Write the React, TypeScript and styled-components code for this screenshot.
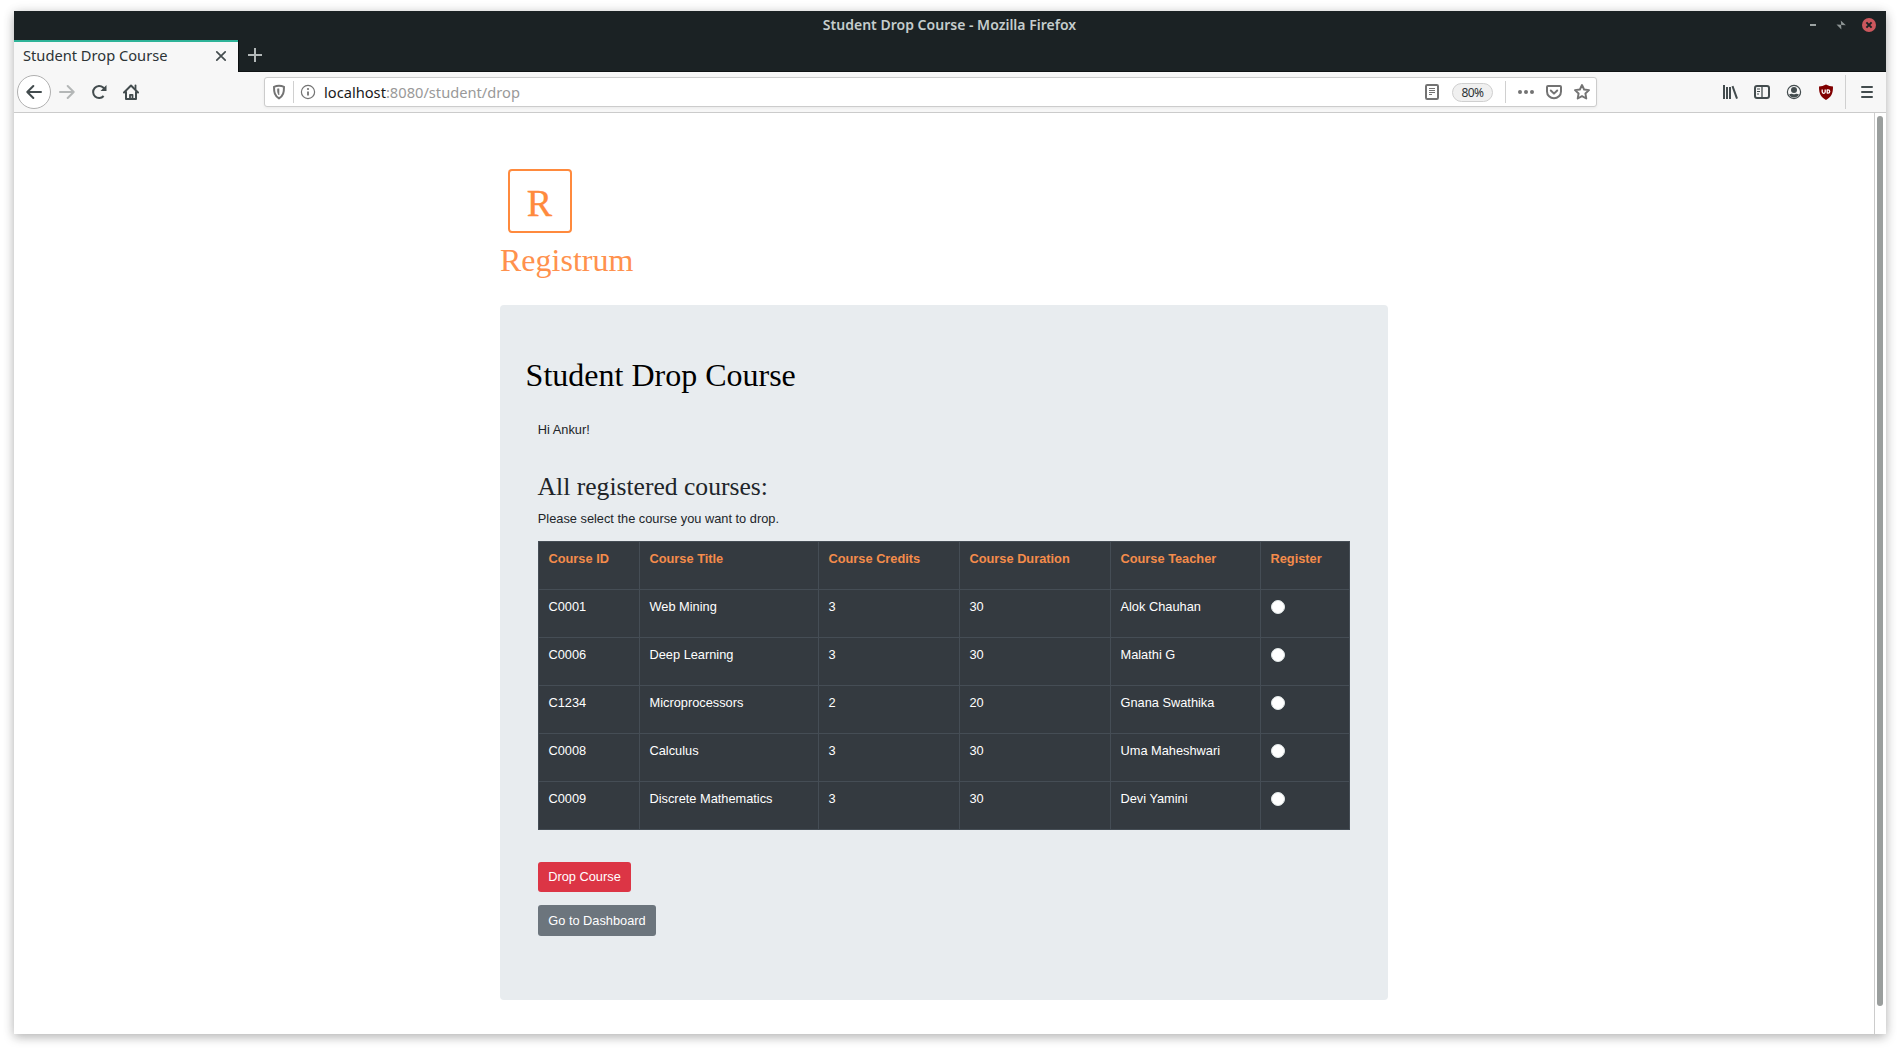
import React from "react";
import styled, { createGlobalStyle } from "styled-components";

const ui = `"Noto Sans", "Open Sans", sans-serif`;
const sans = `"Liberation Sans", Arial, sans-serif`;
const serif = `"Liberation Serif", "Times New Roman", serif`;

const GlobalStyle = createGlobalStyle`
  *, *::before, *::after { box-sizing: border-box; }
  html, body { margin: 0; background: #fff; }
  body { height: 1051px; overflow: hidden; }
`;

const Desktop = styled.div`
  height: 1051px;
  padding: 11px 14px 17px;
  background: #fff;
`;

const Window = styled.div`
  display: flex;
  flex-direction: column;
  height: 1023px;
  background: #fff;
  box-shadow: 0 3px 10px rgba(0, 0, 0, 0.28), 0 0 14px rgba(0, 0, 0, 0.05);
`;

const TitleBar = styled.header`
  display: grid;
  grid-template-columns: 1fr auto 1fr;
  align-items: center;
  flex: none;
  height: 29px;
  background: #1b2224;
`;

const WindowTitle = styled.div`
  grid-column: 2;
  padding: 0 1px 1px 0;
  font: 600 14px/20px ${ui};
  letter-spacing: 0.01px;
  color: #c5cdcd;
  white-space: nowrap;
`;

const WindowControls = styled.div`
  display: flex;
  justify-content: flex-end;
  align-items: center;
  gap: 14px;
  padding: 0 10px 1px 0;
  svg { display: block; }
`;

const TabStrip = styled.div`
  display: flex;
  flex: none;
  height: 32px;
  background: #1b2224;
`;

const Tab = styled.div`
  display: flex;
  align-items: center;
  justify-content: space-between;
  width: 224px;
  padding: 0 11px 4px 9px;
  border-top: 2px solid #2eb398;
  background: #f7f7f7;
  font: 14.67px/20px ${ui};
  color: #2c3335;
  svg { display: block; margin-top: 2px; }
`;

const NewTab = styled.div`
  display: flex;
  align-items: center;
  flex: 1;
  padding: 0 0 1px 9px;
  border-left: 1px solid #0c0f10;
  border-bottom: 1px solid #0f1314;
`;

const Toolbar = styled.div`
  display: flex;
  align-items: center;
  flex: none;
  height: 41px;
  background: #f7f7f7;
  border-bottom: 1px solid #cbcbcb;
  svg { display: block; flex: none; }
`;

const NavButtons = styled.div`
  display: flex;
  align-items: center;
  width: 250px;
  padding-left: 3px;
`;

const BackButton = styled.div`
  display: grid;
  place-items: center;
  width: 34px;
  height: 34px;
  border: 1px solid #b0b0b0;
  border-radius: 50%;
  background: #fff;
`;

const NavIcon = styled.div<{ $gap: number }>`
  margin-left: ${(p) => p.$gap}px;
`;

const UrlBar = styled.div`
  display: flex;
  align-items: center;
  width: 1333px;
  height: 30px;
  border: 1px solid #cccccc;
  border-radius: 3px;
  background: #fff;
  box-shadow: 0 1px 3px rgba(0, 0, 0, 0.06);
`;

const Divider = styled.span<{ $height: number; $left: number; $right: number }>`
  width: 1px;
  height: ${(p) => p.$height}px;
  margin: 0 ${(p) => p.$right}px 0 ${(p) => p.$left}px;
  background: #d0d0d0;
`;

const Address = styled.div`
  flex: 1;
  padding-left: 8px;
  font: 14.67px/20px ${ui};
  color: #999;
  span { color: #1a1a1a; }
`;

const ZoomBadge = styled.span`
  width: 41px;
  height: 19px;
  margin-left: 12px;
  border: 1px solid #cfcfcf;
  border-radius: 10px;
  background: #f0f0f0;
  font: 12px/17px ${ui};
  letter-spacing: -0.5px;
  text-align: center;
  color: #2c3335;
`;

const PageActions = styled.div`
  display: flex;
  align-items: center;
  gap: 10px;
  padding-right: 6px;
`;

const Extensions = styled.div`
  display: flex;
  align-items: center;
  flex: 1;
  justify-content: flex-end;
  padding-right: 11px;
`;

const Viewport = styled.div`
  display: flex;
  flex: 1;
  min-height: 0;
`;

const Page = styled.main`
  flex: 1;
  padding: 56px 0 0 486px;
  font: 12.8px/19.2px ${sans};
  color: #212529;
`;

const ScrollTrack = styled.div`
  width: 12px;
  padding: 3px 2px;
  border-left: 1px solid #cccccc;
`;

const ScrollThumb = styled.div`
  width: 6px;
  height: 890px;
  border-radius: 3px;
  background: #9a9e9d;
`;

const Logo = styled.div`
  display: grid;
  place-items: center;
  width: 64px;
  height: 64px;
  margin-left: 8px;
  padding: 4px 1px 0 0;
  border: 2px solid #ff8a3d;
  border-radius: 4px;
  font: 38px/1 ${serif};
  color: #ff8a3d;
  -webkit-text-stroke: 0.3px #ff8a3d;
`;

const Brand = styled.h2`
  margin: 8px 0 0;
  font: 400 32px/38px ${serif};
  color: #ff914d;
`;

const Card = styled.section`
  width: 888px;
  height: 695px;
  margin-top: 26px;
  padding: 51px 25.6px 0;
  border-radius: 4px;
  background: #e8ecef;
`;

const PageHeading = styled.h2`
  margin: 0;
  font: 400 32px/38px ${serif};
  color: #000;
`;

const CardBody = styled.div`
  padding: 26px 12.4px 0;
`;

const Text = styled.p`
  margin: 0 0 0 -0.2px;
`;

const SectionHeading = styled.h4`
  margin: 32px 0 7px -0.4px;
  font: 400 25.6px/31px ${serif};
`;

const Table = styled.table`
  width: 812px;
  margin-top: 13px;
  table-layout: fixed;
  border-collapse: separate;
  border-spacing: 0;
  border-top: 1px solid #454d55;
  border-left: 1px solid #454d55;
  background: #343a40;
  color: #fff;
`;

const Column = styled.col<{ $width: number }>`
  width: ${(p) => p.$width}px;
`;

const Cell = styled.td`
  height: 48px;
  padding: 7px 9px 0 9.5px;
  border-right: 1px solid #454d55;
  border-bottom: 1px solid #454d55;
  vertical-align: top;
  text-align: left;
`;

const HeadCell = styled(Cell)`
  font-weight: 700;
  color: #f58c4b;
`;

const Radio = styled.input`
  appearance: none;
  display: block;
  width: 14px;
  height: 14px;
  margin: 3px 0 0 0.5px;
  border: 1px solid #dfe6e6;
  border-radius: 50%;
  background: #fff;
`;

const Actions = styled.div`
  display: flex;
  flex-direction: column;
  align-items: flex-start;
  gap: 13px;
  margin-top: 32px;
`;

const Button = styled.button<{ $color: string; $width: number; $height: number }>`
  width: ${(p) => p.$width}px;
  height: ${(p) => p.$height}px;
  padding: 0 0 1px;
  border: 0;
  border-radius: 3px;
  background: ${(p) => p.$color};
  font: 12.8px/19px ${sans};
  color: #fff;
`;

const columns = [
  { title: "Course ID", width: 101 },
  { title: "Course Title", width: 179 },
  { title: "Course Credits", width: 141 },
  { title: "Course Duration", width: 151 },
  { title: "Course Teacher", width: 150 },
  { title: "Register", width: 89 },
];

const courses = [
  ["C0001", "Web Mining", "3", "30", "Alok Chauhan"],
  ["C0006", "Deep Learning", "3", "30", "Malathi G"],
  ["C1234", "Microprocessors", "2", "20", "Gnana Swathika"],
  ["C0008", "Calculus", "3", "30", "Uma Maheshwari"],
  ["C0009", "Discrete Mathematics", "3", "30", "Devi Yamini"],
];

const INK = "#434c4e";
const GREY = "#737373";

type IconProps = {
  size?: number;
  color?: string;
  width?: number;
  children: React.ReactNode;
};

const Icon = ({ size = 16, color = INK, width = 2, children }: IconProps) => (
  <svg
    width={size}
    height={size}
    viewBox="0 0 16 16"
    fill="none"
    stroke={color}
    strokeWidth={width}
    strokeLinecap="round"
    strokeLinejoin="round"
  >
    {children}
  </svg>
);

const Controls = () => (
  <WindowControls>
    <svg width="14" height="14">
      <path d="M4 6h6v2H4z" fill="#9ca3a3" />
    </svg>
    <svg width="14" height="14" fill="#8d9494">
      <path d="M6.800 2.500l5 4.800-4.600-.4z" />
      <path d="M2.500 6.400l4.600.4.300 4.700z" />
    </svg>
    <svg width="14" height="14">
      <circle cx="7" cy="7" r="7" fill="#cc575d" />
      <path d="M4.400 4.400l5.200 5.200M9.600 4.400l-5.200 5.200" stroke="#1b2224" strokeWidth="2" />
    </svg>
  </WindowControls>
);

const BrowserToolbar = () => (
  <Toolbar>
    <NavButtons>
      <BackButton>
        <Icon>
          <path d="M15 8H1.500M7.300 2L1.300 8l6 6" />
        </Icon>
      </BackButton>
      <NavIcon $gap={8}>
        <Icon color="#b4b7b7">
          <path d="M1 8h13.500M8.700 2l6 6-6 6" />
        </Icon>
      </NavIcon>
      <NavIcon $gap={16}>
        <Icon>
          <path d="M12.600 12A6 6 0 1 1 12.200 3.600L14 5.500" strokeLinecap="butt" />
          <path d="M15.500 1v6H9.500z" fill={INK} stroke="none" />
        </Icon>
      </NavIcon>
      <NavIcon $gap={16}>
        <Icon>
          <path d="M1 8.500L8 1.500l7 7M3 8v7h10V8" />
          <path d="M7 15v-4.200h2.500V15" strokeWidth="1.800" />
          <path d="M12.500 1.500V5" strokeWidth="1.800" />
        </Icon>
      </NavIcon>
    </NavButtons>
    <UrlBar>
      <NavIcon $gap={6}>
        <Icon color={GREY}>
          <path d="M8 1.800c1.700 0 3.300.3 5 1 0 5.500-.6 9-5 11.600C3.600 11.800 3 8.300 3 2.800c1.700-.7 3.300-1 5-1z" />
          <path d="M8 5v6c-1.200-1.200-1.600-3-1.600-5.800z" strokeWidth=".6" fill={GREY} />
        </Icon>
      </NavIcon>
      <Divider $height={22} $left={6} $right={6} />
      <Icon color={GREY} width={1.2}>
        <circle cx="8" cy="8" r="6.600" />
        <path d="M8 7.500v4" strokeWidth="1.800" strokeLinecap="butt" />
        <circle cx="8" cy="5" r="1.100" fill={GREY} stroke="none" />
      </Icon>
      <Address>
        <span>localhost</span>:8080/student/drop
      </Address>
      <Icon color={GREY}>
        <rect x="2" y="1" width="12" height="14" rx="1.200" />
        <path d="M5 4.500h6M5 6.500h6M5 8.500h6M5 10.500h3" strokeWidth="1" strokeLinecap="butt" />
      </Icon>
      <ZoomBadge>80%</ZoomBadge>
      <Divider $height={22} $left={12} $right={12} />
      <PageActions>
        <Icon>
          <g fill={GREY} stroke="none">
            <circle cx="2" cy="8" r="2" />
            <circle cx="8" cy="8" r="2" />
            <circle cx="14" cy="8" r="2" />
          </g>
        </Icon>
        <NavIcon $gap={2}>
          <Icon color={GREY}>
            <path d="M2 2h12a1 1 0 0 1 1 1v4.500a7 6.800 0 0 1-14 0V3a1 1 0 0 1 1-1z" />
            <path d="M4.800 6.500L8 9.600l3.200-3.100" />
          </Icon>
        </NavIcon>
        <NavIcon $gap={2}>
          <Icon color={GREY} width={1.9}>
            <path d="M8 1l2.100 4.500 4.900.6-3.600 3.400.9 5L8 12.100l-4.300 2.400.9-5L1 6.100l4.900-.6z" />
          </Icon>
        </NavIcon>
      </PageActions>
    </UrlBar>
    <Extensions>
      <Icon>
        <path d="M2 1v14M5 3v12M8 3v12M10.500 2.200L15 14.600" strokeLinecap="butt" />
      </Icon>
      <NavIcon $gap={16}>
        <Icon>
          <rect x="1" y="2" width="14" height="12" rx="2" />
          <path d="M8 2v12" strokeWidth="1.300" />
          <path d="M3 5h3M3 7.500h3M3 10h2" strokeWidth="1" strokeLinecap="butt" />
        </Icon>
      </NavIcon>
      <NavIcon $gap={16}>
        <Icon width={1.2}>
          <circle cx="8" cy="8" r="6.600" />
          <circle cx="8" cy="6" r="3" fill={INK} stroke="none" />
          <path d="M3 10.500c1.500-.8 2.800-.7 3.500-.5 1 .4 2 .4 3 0 .7-.2 2-.3 3.500.5-1 2-2.700 3-5 3s-4-1-5-3z" fill={INK} stroke="none" />
        </Icon>
      </NavIcon>
      <NavIcon $gap={16}>
        <Icon>
          <path d="M8 .5c2.300 1.200 4.600 1.900 7 2 0 7.100-1.500 10.500-7 13.500C2.500 13 1 9.600 1 2.500c2.400-.1 4.700-.8 7-2z" fill="#800000" stroke="none" />
          <path d="M4.200 5.500v2.300a1.500 1.500 0 0 0 3 0V5.500M9.200 5.900v3.200h.9a1.600 1.600 0 0 0 0-3.200z" stroke="#fff" strokeWidth="1.300" strokeLinecap="butt" />
        </Icon>
      </NavIcon>
      <Divider $height={34} $left={11} $right={13} />
      <Icon>
        <path d="M3 3h10M3 8h10M3 13h10" />
      </Icon>
    </Extensions>
  </Toolbar>
);

const CourseTable = () => (
  <Table>
    <colgroup>
      {columns.map((c) => (
        <Column key={c.title} $width={c.width} />
      ))}
    </colgroup>
    <thead>
      <tr>
        {columns.map((c) => (
          <HeadCell as="th" key={c.title}>
            {c.title}
          </HeadCell>
        ))}
      </tr>
    </thead>
    <tbody>
      {courses.map((row) => (
        <tr key={row[0]}>
          {row.map((value, i) => (
            <Cell key={i}>{value}</Cell>
          ))}
          <Cell>
            <Radio type="radio" name="course" value={row[0]} />
          </Cell>
        </tr>
      ))}
    </tbody>
  </Table>
);

export default function App() {
  return (
    <Desktop>
      <GlobalStyle />
      <Window>
        <TitleBar>
          <WindowTitle>Student Drop Course - Mozilla Firefox</WindowTitle>
          <Controls />
        </TitleBar>
        <TabStrip>
          <Tab>
            Student Drop Course
            <svg width="12" height="12" stroke={INK} strokeWidth="1.7" strokeLinecap="round">
              <path d="M1.800 1.800l8.400 8.400M10.200 1.800l-8.400 8.400" />
            </svg>
          </Tab>
          <NewTab>
            <svg width="14" height="14" stroke="#b3b9b9" strokeWidth="2">
              <path d="M7 0v14M0 7h14" />
            </svg>
          </NewTab>
        </TabStrip>
        <BrowserToolbar />
        <Viewport>
          <Page>
            <Logo>R</Logo>
            <Brand>Registrum</Brand>
            <Card>
              <PageHeading>Student Drop Course</PageHeading>
              <CardBody>
                <Text>Hi Ankur!</Text>
                <SectionHeading>All registered courses:</SectionHeading>
                <Text>Please select the course you want to drop.</Text>
                <CourseTable />
                <Actions>
                  <Button $color="#dc3545" $width={93} $height={30}>
                    Drop Course
                  </Button>
                  <Button $color="#6c757d" $width={118} $height={31}>
                    Go to Dashboard
                  </Button>
                </Actions>
              </CardBody>
            </Card>
          </Page>
          <ScrollTrack>
            <ScrollThumb />
          </ScrollTrack>
        </Viewport>
      </Window>
    </Desktop>
  );
}
